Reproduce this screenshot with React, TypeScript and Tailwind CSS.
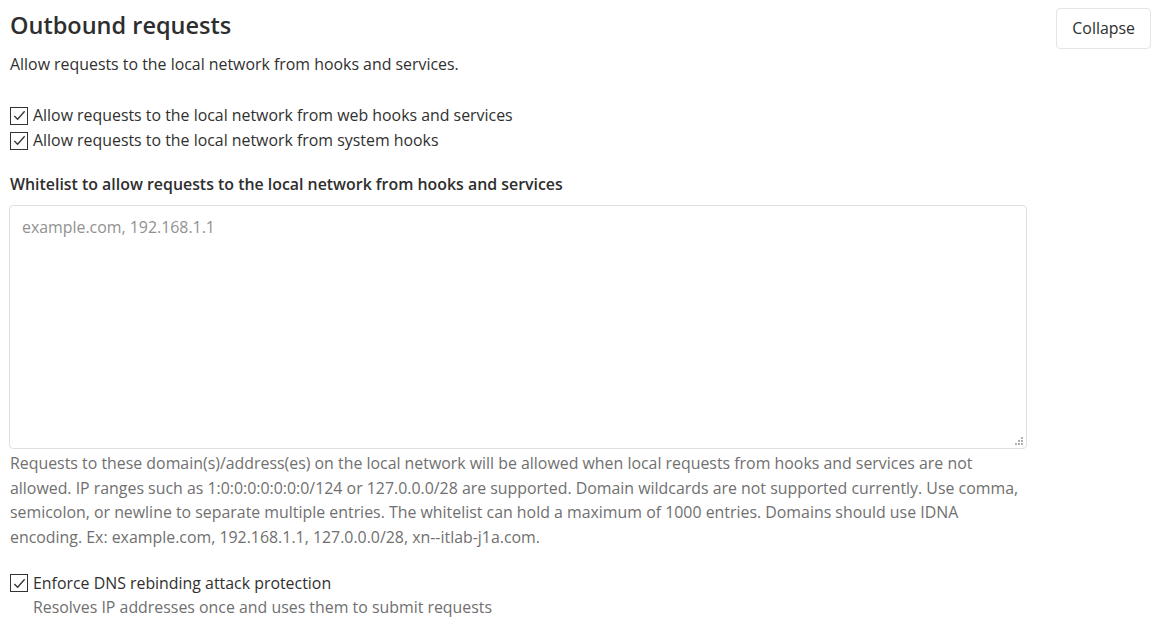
import React from 'react'

function Check({ label }: { label: string }) {
  return (
    <label className="flex items-center gap-[5px] text-[15.9px] leading-[25px] text-[#303030]">
      <span className="flex h-[18px] w-[18px] shrink-0 items-center justify-center border border-[#333] bg-white">
        <svg viewBox="0 0 16 16" className="h-[15px] w-[15px]" fill="none" stroke="#333" strokeWidth="1.4">
          <path d="M2.5 8.5 L6 12 L13.5 3.5" />
        </svg>
      </span>
      {label}
    </label>
  )
}

function Grip() {
  return (
    <svg viewBox="0 0 10 10" className="pointer-events-none absolute bottom-[3px] right-[3px] h-[10px] w-[10px]" fill="#b0b0b0">
      <rect x="7" y="1" width="2" height="2" />
      <rect x="4" y="4" width="2" height="2" />
      <rect x="7" y="4" width="2" height="2" />
      <rect x="1" y="7" width="2" height="2" />
      <rect x="4" y="7" width="2" height="2" />
      <rect x="7" y="7" width="2" height="2" />
    </svg>
  )
}

export default function App() {
  return (
    <div className="min-h-screen bg-white pl-[10px] pr-[11px] pt-[8px]" style={{ fontFamily: '"Open Sans", "Liberation Sans", sans-serif' }}>
      <div className="flex items-start justify-between">
        <div>
          <h2 className="mt-[1px] text-[23.5px] font-semibold leading-[32px] text-[#2e2e2e]">Outbound requests</h2>
          <p className="mt-[11px] text-[15.9px] leading-[24px] text-[#303030]">
            Allow requests to the local network from hooks and services.
          </p>
        </div>
        <button className="h-[41px] rounded-[4px] border border-[#e5e5e5] bg-white px-[15px] pt-[1px] text-[15.9px] text-[#2e2e2e]">
          Collapse
        </button>
      </div>

      <div className="w-[1017px]">
        <div className="mt-[27px] flex flex-col">
          <Check label="Allow requests to the local network from web hooks and services" />
          <Check label="Allow requests to the local network from system hooks" />
        </div>

        <div className="mt-[19px] text-[15.9px] font-semibold leading-[24px] text-[#2e2e2e]">
          Whitelist to allow requests to the local network from hooks and services
        </div>
        <div className="relative -ml-[1px] mt-[9px]">
          <textarea
            className="block h-[244px] w-full resize-none rounded-[4px] border border-[#dfdfdf] px-[12px] py-[9px] text-[15.9px] leading-[24px] text-[#2e2e2e] placeholder:text-[#919191] focus:outline-none"
            placeholder="example.com, 192.168.1.1"
          />
          <Grip />
        </div>
        <p className="mt-[2px] text-[15.9px] leading-[24.7px] text-[#707070]">
          Requests to these domain(s)/address(es) on the local network will be allowed when local requests from hooks and services are not allowed. IP ranges such as 1:0:0:0:0:0:0:0/124 or 127.0.0.0/28 are supported. Domain wildcards are not supported currently. Use comma, semicolon, or newline to separate multiple entries. The whitelist can hold a maximum of 1000 entries. Domains should use IDNA encoding. Ex: example.com, 192.168.1.1, 127.0.0.0/28, xn--itlab-j1a.com.
        </p>

        <div className="mt-[21px]">
          <Check label="Enforce DNS rebinding attack protection" />
          <p className="-mt-[1px] pl-[23px] text-[15.9px] leading-[24px] text-[#707070]">
            Resolves IP addresses once and uses them to submit requests
          </p>
        </div>
      </div>
    </div>
  )
}
